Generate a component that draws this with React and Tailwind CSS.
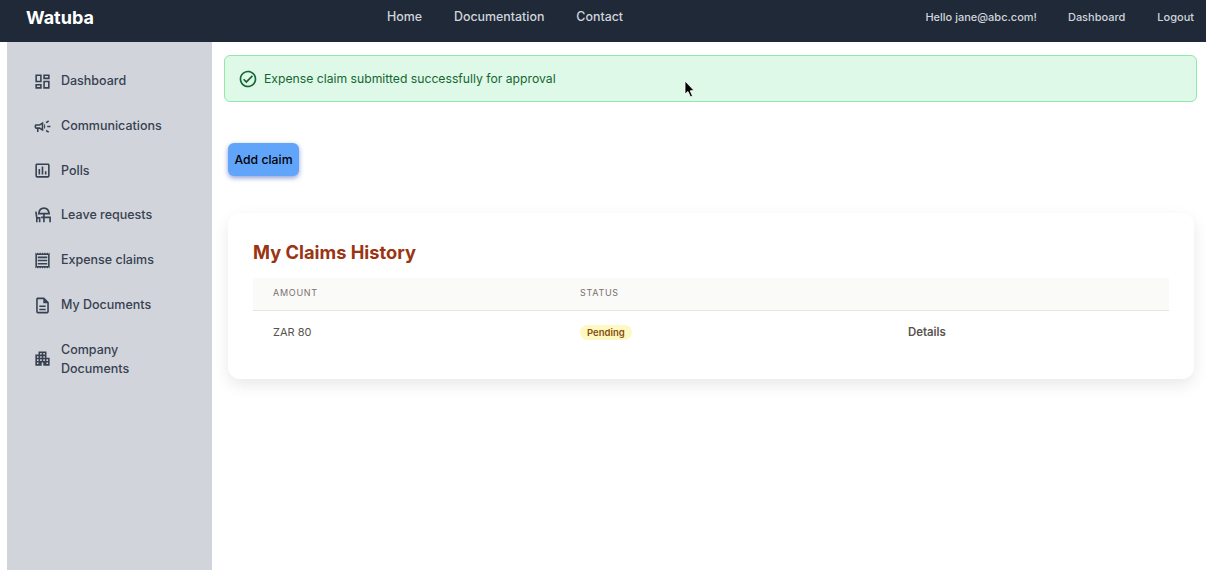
import {
  MdOutlineDashboard,
  MdOutlineCampaign,
  MdOutlinePoll,
  MdOutlineReceipt,
  MdOutlineDescription,
  MdOutlineApartment,
  MdOutlineCheckCircle,
} from "react-icons/md";

const LeaveIcon = ({ className }) => {
  return (
    <svg className={className} viewBox="0 0 20 20" fill="none" stroke="currentColor" strokeWidth="1.7">
      <path d="M6 8C6.5 4 9 2.2 11.5 2.2S16.5 4 17 8Z" />
      <path d="M11.5 8V17" />
      <path d="M3 6L4 12.5H7V17M4 12.5V17" />
      <path d="M8.5 12H18.5M15.5 12H18V17" />
    </svg>
  );
};

const menu = [
  { label: "Dashboard", icon: MdOutlineDashboard },
  { label: "Communications", icon: MdOutlineCampaign },
  { label: "Polls", icon: MdOutlinePoll },
  { label: "Leave requests", icon: LeaveIcon },
  { label: "Expense claims", icon: MdOutlineReceipt },
  { label: "My Documents", icon: MdOutlineDescription },
];

const Navbar = () => {
  return (
    <nav className="relative flex h-[42px] items-center justify-between bg-[#1f2937] pb-[7px] pl-[26px] pr-3">
      <span className="text-[18px] font-bold text-white">Watuba</span>
      <div className="absolute left-[387px] top-[8px] flex gap-8 text-[12.4px] font-medium leading-[18px] text-[#d1d5db]">
        <span>Home</span>
        <span>Documentation</span>
        <span>Contact</span>
      </div>
      <div className="flex gap-[32px] text-[11px] font-medium text-[#d1d5db]">
        <span>Hello jane@abc.com!</span>
        <span className="-ml-[1px]">Dashboard</span>
        <span>Logout</span>
      </div>
    </nav>
  );
};

const Sidebar = () => {
  return (
    <aside className="ml-[7px] w-[205px] shrink-0 bg-[#d1d5db] pl-[25.5px] pt-[16px] text-[12.5px] font-medium text-[#374151]">
      {menu.map((item) => (
        <div key={item.label} className="flex h-[44.8px] items-center gap-[9.5px] pt-[2px]">
          <item.icon className="h-[19px] w-[19px] shrink-0" />
          <span>{item.label}</span>
        </div>
      ))}
      <div className="mt-[13px] flex items-center gap-[9.5px] leading-[19px]">
        <MdOutlineApartment className="h-[19px] w-[19px] shrink-0" />
        <span>
          Company
          <br />
          Documents
        </span>
      </div>
    </aside>
  );
};

const Cursor = () => {
  return (
    <svg
      className="absolute left-[684px] top-[80px]"
      width="12"
      height="20"
      viewBox="0 0 12 20"
    >
      <path
        d="M1 1 L1 14 L4 11.5 L6.5 17 L8.5 16 L6.2 10.8 L10 10.5 Z"
        fill="#000"
        stroke="#fff"
        strokeWidth="0.8"
      />
    </svg>
  );
};

const App = () => {
  return (
    <div className="relative flex h-[570px] flex-col overflow-hidden bg-white font-['Inter',sans-serif]">
      <Navbar />
      <div className="flex flex-1">
        <Sidebar />
        <main className="flex-1 pl-[12px] pr-[9px] pt-[13px]">
          <div className="flex h-[47px] items-center gap-[6px] rounded-md border border-[#8fe9a9] bg-[#def9e7] pl-[13px] text-[12.2px] text-[#166534]">
            <MdOutlineCheckCircle className="h-[20px] w-[20px]" />
            <span className="pt-[1px]">Expense claim submitted successfully for approval</span>
          </div>
          <button className="ml-[4px] mt-[41px] h-[33px] w-[71px] rounded-md bg-[#60a5fa] pt-[1px] text-[12.25px] font-medium text-black shadow-[0_2px_5px_rgba(30,64,175,0.5)]">
            Add claim
          </button>
          <section className="ml-[4px] mr-[3px] mt-[37px] h-[166px] rounded-xl bg-white px-[25px] pt-[26px] shadow-[0_6px_16px_rgba(0,0,0,0.09)]">
            <h2 className="text-[18.25px] font-bold leading-[26px] text-[#9a3412]">
              My Claims History
            </h2>
            <table className="mt-[13px] w-full table-fixed text-left">
              <thead>
                <tr className="h-[32px] border-b border-[#e7e5e4] bg-[#fafaf9] text-[9px] tracking-[0.08em] text-[#78716c]">
                  <th className="w-[327px] pb-[3px] pl-[20px] font-normal">AMOUNT</th>
                  <th className="w-[328px] pb-[3px] font-normal">STATUS</th>
                  <th></th>
                </tr>
              </thead>
              <tbody>
                <tr className="h-[43px] text-[11px] text-[#57534e]">
                  <td className="pl-[20px]">ZAR 80</td>
                  <td>
                    <span className="rounded-full bg-[#fef9c3] px-[7px] py-[2px] text-[9.5px] font-semibold text-[#854d0e]">
                      Pending
                    </span>
                  </td>
                  <td className="pt-[2px] text-[11.4px] font-semibold">Details</td>
                </tr>
              </tbody>
            </table>
          </section>
        </main>
      </div>
      <Cursor />
    </div>
  );
};

export default App;
